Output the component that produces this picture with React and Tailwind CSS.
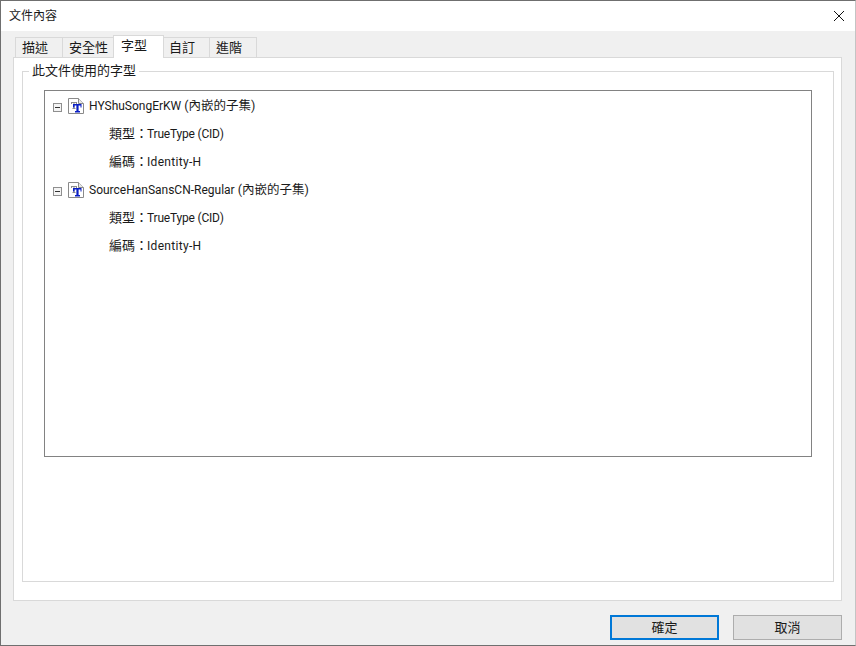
import React from "react";

const FONT = "font-['Roboto','Noto_Sans_CJK_TC',sans-serif]";

function FontIcon() {
  return (
    <svg width="16" height="16" viewBox="0 0 16 16" className="shrink-0">
      <path d="M0.5 0.5H10.5L15.5 5.5V15.5H0.5Z" fill="#fff" stroke="#8a8a8a" />
      <path d="M10.5 0.5V5.5H15.5" fill="#e8e8e8" stroke="#8a8a8a" />
      <path d="M3 4H9V6H8V5H6.5V10H7.5V11H4.5V10H5.5V5H4V6H3Z" fill="#8c8c8c" />
      <path d="M5 6H13.5V9.5H12.5V7.5H10.6V13H12V14.5H7V13H8.4V7.5H6.5V9.5H5Z" fill="#0a1fc4" />
    </svg>
  );
}

function Minus() {
  return (
    <span className="mt-[3px] flex h-[9px] w-[9px] shrink-0 items-center justify-center border border-[#8f8f8f] bg-[#f4f4f4]">
      <span className="h-px w-[5px] bg-[#333]" />
    </span>
  );
}

function Zh({ children }) {
  return <span className="text-[13px]">{children}</span>;
}

function Node({ name }) {
  return (
    <div>
      <div className="flex h-7 items-center">
        <span className="ml-[8px] mr-[6px] flex"><Minus /></span>
        <FontIcon />
        <span className="ml-[5px] whitespace-nowrap">{name} <span className="text-[12.5px]">(內嵌的子集)</span></span>
      </div>
      <div className="flex h-7 items-center pl-[64px] whitespace-nowrap"><span><Zh>類型：</Zh><span className="-ml-px tracking-[-0.2px]">TrueType (CID)</span></span></div>
      <div className="flex h-7 items-center pl-[64px] whitespace-nowrap"><span><Zh>編碼：</Zh><span className="-ml-px tracking-[0.3px]">Identity-H</span></span></div>
    </div>
  );
}

function Tab({ label, w, active }) {
  return active ? (
    <div className={`${w} relative z-10 -mb-px -ml-px flex h-[23px] items-start justify-start border border-b-0 border-[#d9d9d9] bg-white pl-[7px] leading-[20px]`}>
      {label}
    </div>
  ) : (
    <div className={`${w} flex h-[20px] items-center justify-start border border-b-0 border-[#d9d9d9] bg-[#f0f0f0]`}>
      {label}
    </div>
  );
}

export default function App() {
  return (
    <div className={`${FONT} flex h-[646px] w-[856px] flex-col overflow-hidden border border-[#6f6f6f] border-r-[#c4c4c4] bg-[#f0f0f0] text-[12px] text-[#1a1a1a]`}>
      <div className="flex h-[30px] shrink-0 items-center justify-between bg-white pl-[8px] pr-[10px]">
        <span>文件內容</span>
        <svg width="12" height="12" viewBox="0 0 12 12">
          <path d="M1 1L11 11M11 1L1 11" stroke="#111" strokeWidth="1" />
        </svg>
      </div>

      <div className="flex min-h-0 flex-1 flex-col pl-3 pr-[13px] pt-[3px] pb-[14px]">
        <div className="flex h-[23px] shrink-0 items-end pl-[2px] text-[13px]">
          <Tab label="描述" w="w-[48px] pl-[6px]" />
          <Tab label="安全性" w="w-[52px] -ml-px pl-[6px]" />
          <Tab label="字型" w="w-[51px]" active />
          <Tab label="自訂" w="w-[47px] -ml-px pl-[5px]" />
          <Tab label="進階" w="w-[48px] -ml-px pl-[6px]" />
        </div>

        <div className="flex min-h-0 flex-1 flex-col border border-[#d9d9d9] bg-white pt-[13px] pb-[18px] pl-2 pr-[7px]">
          <div className="relative flex min-h-0 flex-1 flex-col border border-[#d9d9d9] pt-[18px] pl-[21px] pr-[21px]">
            <span className="absolute -top-[8px] left-[6px] bg-white px-[3px] text-[13px] leading-[14px]">此文件使用的字型</span>
            <div className="h-[367px] border border-[#828282] bg-white pt-px">
              <Node name="HYShuSongErKW" />
              <Node name="SourceHanSansCN-Regular" />
            </div>
          </div>
        </div>
      </div>

      <div className="flex h-[30px] shrink-0 items-start justify-end gap-[14px] pr-[13px] text-[13px]">
        <button className="h-[25px] w-[109px] border-2 border-[#0078d7] bg-[#e1e1e1]">確定</button>
        <button className="h-[25px] w-[109px] border border-[#adadad] bg-[#e1e1e1]">取消</button>
      </div>
    </div>
  );
}
